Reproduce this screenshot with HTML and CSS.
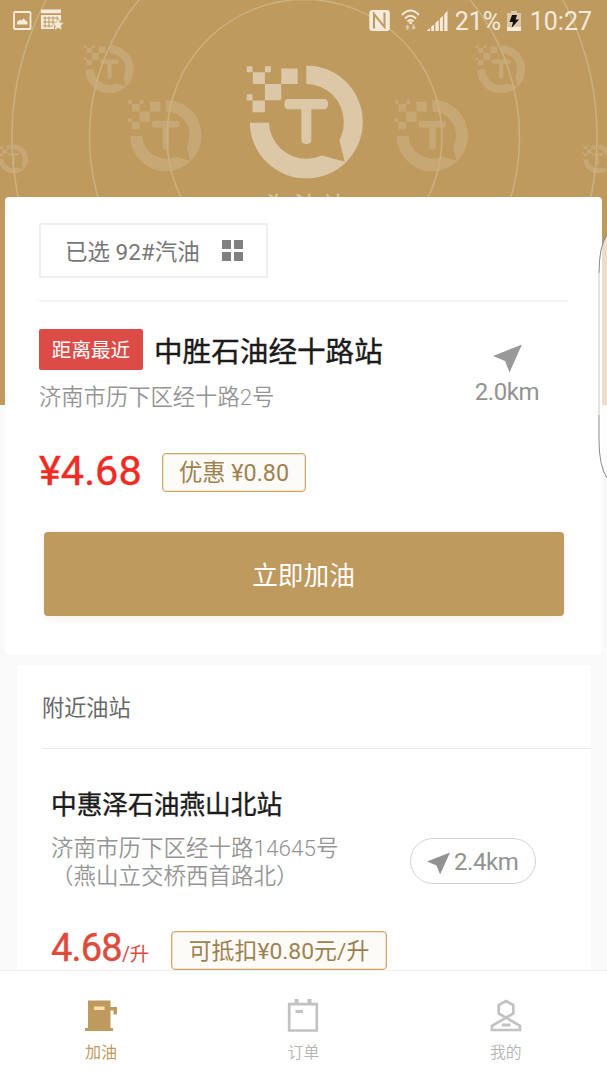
FILE: index.html
```html
<!DOCTYPE html>
<html lang="zh-CN">
<head>
<meta charset="utf-8">
<title>加油</title>
<link rel="stylesheet" href="styles.css">
</head>
<body>
<div class="app">
  <div class="hero">
    <svg class="hero-art" viewBox="0 0 607 405" aria-hidden="true">
      <defs>
        <symbol id="logo" viewBox="140 78 350 338">
          <path d="M319 78A169 169 0 1 1 150 249H207A113 113 0 0 0 321 357Q345 356 366 347L434 366L418 303Q431 275 431 247A113 113 0 0 0 319 133Z"/>
          <path d="M140 80h18v18h-18zM159 98h36v35h-36zM195 80h18v18h-18zM195 133h49v49h-49zM244 87h49v46h-49zM140 164h18v19h-18zM158 183h37v35h-37z"/>
          <path d="M265 178H372Q384 178 384 193T372 209H334V300Q334 313 319 313T304 300V209H265Q253 209 253 193T265 178Z"/>
        </symbol>
      </defs>
      <g class="ghosts">
        <use href="#logo" x="128" y="99.500" width="74" height="72"/>
        <use href="#logo" x="394.500" y="99.500" width="74" height="72"/>
        <use href="#logo" x="84" y="45" width="50" height="48.500"/>
        <use href="#logo" x="475.500" y="45" width="50" height="48.500"/>
        <use href="#logo" x="-2" y="144.500" width="30" height="29"/>
        <use href="#logo" x="582.500" y="144.500" width="30" height="29"/>
      </g>
      <g class="rings">
        <circle cx="304.5" cy="137" r="137.5"/>
        <circle cx="304.5" cy="137" r="215"/>
        <circle cx="304.5" cy="137" r="292.500"/>
      </g>
      <use class="main-logo" href="#logo" x="246.500" y="65.500" width="117" height="113"/>
      <text class="brand" x="266" y="213.500">淘油站</text>
    </svg>
  </div>

  <header class="status">
    <svg class="status-left" viewBox="0 0 52 24" aria-hidden="true">
      <rect x="2" y="4" width="16.500" height="17" rx="1" fill="none" stroke="currentColor" stroke-width="1.800"/>
      <path d="M5 16.500V14L8 11.500L9.500 12.500L11.500 10.500L15.500 14V16.500Z" fill="currentColor"/>
      <path d="M29 1.500h20v3.800H29zM29 7h20v5l-3 4-4 2 0 3H29z" fill="currentColor"/>
      <path d="M31 10h15M31 14h12M31 18h10M33 8.500v11M37 8.500v11M41 8.500v8M45 8.500v3" class="grid-lines"/>
      <path d="M46.300 10.300L48 14.500L52 14.800L49 17.600L50 22.500L46.300 20L42.300 22.500L43.300 17.600L40.300 14.800L44.600 14.500Z" class="star"/>
    </svg>
    <div class="status-right">
      <svg class="icons" viewBox="0 0 80 24" aria-hidden="true">
        <rect x=".3" y="2" width="20.500" height="21" rx="3" fill="currentColor"/>
        <path d="M5 20.500V6L15.500 19V4.500" class="nfc"/>
        <g class="wifi">
          <path d="M33 7Q41.500 -2 50 7M36 10.500Q41.500 5 47 10.500M38.500 13.500Q41.500 10.500 44.500 13.500"/>
        </g>
        <circle cx="41.500" cy="14.800" r="1.500" fill="currentColor"/>
        <path d="M36 19.500l2.500-3 2.500 3h-1.500V22h-2v-2.500zM42 19l2.500 3 2.500-3h-1.500v-2.500h-2V19z" class="dim"/>
        <path d="M57.500 23L61 20V23zM62.200 18.500l2.800-2V23h-2.800zM66.400 15l3.300-3v11h-3.300zM70.900 10.500l3-2.500v15h-3zM75.200 6.500L78.500 2.500V23h-3.300z" fill="currentColor"/>
      </svg>
      <span class="pct">21%</span>
      <svg class="battery" viewBox="0 0 14 22" aria-hidden="true">
        <path d="M4 1h6v2h4v18H0V3h4z" class="dim"/>
        <path d="M0 17h14v4H0z" fill="currentColor"/>
        <path d="M5 5h5L8.500 9.500H12L4.500 18L6 12H2.500z" fill="#111"/>
      </svg>
      <span class="clock">10:27</span>
    </div>
  </header>

  <main class="content">
    <section class="card nearest">
      <div class="fuel">
        <span>已选 92#汽油</span>
        <svg viewBox="0 0 21 21" aria-hidden="true"><path d="M0 0h9v9H0zM12 0h9v9h-9zM0 12h9v9H0zM12 12h9v9h-9z" fill="#808080"/></svg>
      </div>
      <div class="station">
        <div class="info">
          <div class="heading"><span class="tag">距离最近</span><h1>中胜石油经十路站</h1></div>
          <p class="address">济南市历下区经十路2号</p>
        </div>
        <div class="distance">
          <svg viewBox="0 0 30 29" aria-hidden="true"><path d="M30 0L17 29L12.500 17L0 12Z" fill="#999"/></svg>
          <span>2.0km</span>
        </div>
      </div>
      <div class="pricing"><span class="price">¥4.68</span><span class="chip first">优惠 ¥0.80</span></div>
      <button class="primary">立即加油</button>
    </section>

    <section class="card nearby">
      <h2>附近油站</h2>
      <article class="item">
        <h3>中惠泽石油燕山北站</h3>
        <div class="where">
          <p class="address">济南市历下区经十路14645号<br><span class="paren">（燕山立交桥西首路北）</span></p>
          <div class="pill">
            <svg viewBox="0 0 30 29" aria-hidden="true"><path d="M30 0L17 29L12.500 17L0 12Z" fill="#929292"/></svg>
            <span>2.4km</span>
          </div>
        </div>
        <div class="pricing2"><span class="price2">4.68<small>/升</small></span><span class="chip second">可抵扣¥0.80元/升</span></div>
      </article>
    </section>
  </main>

  <svg class="edge-handle" viewBox="0 0 10 250" aria-hidden="true">
    <path d="M10 5Q2 16 2 43V210Q2 236 10 248Z" fill="#fff" fill-opacity=".68"/>
    <path d="M10 5Q2 16 2 43" class="edge-line"/>
    <path d="M2 43V185" class="edge-line soft"/>
    <path d="M2 185V210Q2 236 10 248" class="edge-line"/>
  </svg>

  <nav class="tabs">
    <div class="tab active">
      <svg viewBox="0 0 34 34" aria-hidden="true">
        <path d="M4 1.500h22.500V8H33v7.500h-3.500v-4H26.500V29H29v3H1v-3h3z" fill="#be9a5f"/>
        <path d="M10 7.500h10.500V11H10z" fill="#ffe0a8"/>
      </svg>
      <span>加油</span>
    </div>
    <div class="tab">
      <svg viewBox="0 0 34 34" aria-hidden="true">
        <path d="M3.200 5.200h27.600v26.300H3.200z" fill="none" stroke="#c2c2c2" stroke-width="2.700"/>
        <path d="M8.500 0h4v4h-4zM21.500 0h4v4h-4zM9.500 11h7.500v3H9.500z" fill="#c2c2c2"/>
      </svg>
      <span>订单</span>
    </div>
    <div class="tab">
      <svg viewBox="0 0 34 34" aria-hidden="true">
        <path d="M17 2L24.300 6V14.500L17 18.700L9.700 14.500V6ZM17 18.700L31 26.800V31H3V26.800Z" fill="none" stroke="#c2c2c2" stroke-width="2.700"/>
        <path d="M13 24.500h8.500v3H13z" fill="#c2c2c2"/>
      </svg>
      <span>我的</span>
    </div>
  </nav>
</div>
</body>
</html>
```
FILE: styles.css
```css
* { box-sizing: border-box; }
body, h1, h2, h3, p { margin: 0; }
body {
  font-family: Roboto, "Noto Sans CJK SC", sans-serif;
  background: #f9f9f9;
}
.app {
  position: relative;
  width: 607px;
  height: 1080px;
  overflow: hidden;
  display: flex;
  flex-direction: column;
}
.app span, h1, h2, h3 { white-space: nowrap; }

/* decorative backdrop behind the status bar and the first card */
.hero {
  position: absolute;
  inset: 0 0 auto;
  height: 405px;
  background: #be9a5f;
}
.hero-art { display: block; width: 607px; height: 405px; }
.rings { fill: none; stroke: #cdb07f; stroke-width: 1.5; }
.ghosts { fill: #c7a875; }
.main-logo { fill: #dcc7a7; }
.brand { fill: #dcc7a7; font-size: 24px; letter-spacing: 4px; }

.status {
  position: relative;
  height: 41px;
  flex: none;
  display: flex;
  justify-content: space-between;
  padding: 8px 15px 0 12px;
  color: #f4ebdd;
}
.status-left { width: 52px; height: 24px; }
.status-right { display: flex; align-items: flex-start; }
.icons { width: 80px; height: 24px; margin-right: 6px; }
.pct, .clock { font-size: 25px; line-height: 27px; }
.pct { width: 52px; letter-spacing: -.1px; }
.clock { letter-spacing: 0; }
.battery { width: 14px; height: 22px; margin: 2px 9px 0 0; }
.dim { fill: #dcc7a7; }
.star { fill: #f4ebdd; stroke: #be9a5f; stroke-width: .6; }
.grid-lines { stroke: #be9a5f; stroke-width: 1; fill: none; }
.nfc { fill: none; stroke: #be9a5f; stroke-width: 2; }
.wifi { fill: none; stroke: currentColor; stroke-width: 2; }

.content {
  position: relative;
  flex: 1;
  min-height: 0;
  overflow: hidden;
  padding: 156px 5px 0;
}
.card { background: #fff; border-radius: 4px; }
.nearest { height: 458px; padding: 26px 34px 0; }
.fuel {
  width: 229px;
  height: 55px;
  border: 2px solid #efefef;
  display: flex;
  align-items: center;
  justify-content: space-between;
  padding: 0 23px 0 24px;
  font-size: 22.5px;
  color: #777;
}
.fuel span { padding-bottom: 2px; }
.fuel svg { width: 21px; height: 21px; }
.station {
  margin-top: 22px;
  border-top: 2px solid #f2f2f2;
  padding-top: 26px;
  display: flex;
  justify-content: space-between;
}
.heading { display: flex; align-items: center; gap: 11px; height: 42px; }
.tag {
  width: 104px;
  height: 41px;
  line-height: 43px;
  text-align: center;
  font-size: 19.6px;
  color: #fff;
  background: #dc4b46;
  border-radius: 2px;
}
h1, h3 { font-weight: 400; color: #1b1b1b; -webkit-text-stroke: .4px #1b1b1b; }
h1 { font-size: 28.6px; }
.address { font-size: 22.3px; line-height: 28px; font-weight: 350; color: #959595; }
.info .address { margin-top: 13px; }
.distance {
  width: 66px;
  margin: 16px 28px 0 0;
  display: flex;
  flex-direction: column;
  align-items: center;
  font-size: 24px;
  letter-spacing: -.4px;
  line-height: 29px;
  color: #929292;
}
.distance svg { width: 29px; height: 29px; margin-bottom: 5px; }
.pricing { display: flex; align-items: center; gap: 21px; margin-top: 41px; height: 40px; }
.price { font-size: 41.5px; line-height: 38px; padding-bottom: 2px; color: #ef2b22; width: 102px; -webkit-text-stroke: .4px #ef2b22; }
.chip {
  height: 39px;
  line-height: 39px;
  border: 1px solid #cda566;
  box-shadow: inset 0 0 0 1px #f1e4cd;
  border-radius: 4px;
  background: #fdfbf8;
  color: #9d8250;
  text-align: center;
  font-size: 23.3px;
}
.first { width: 144px; }
.second { width: 216px; font-size: 22.9px; }
.primary {
  display: block;
  width: 520px;
  height: 84px;
  margin: 40px 0 0 4.5px;
  padding: 0 0 1px;
  border: 0;
  border-radius: 4px;
  background: #be9a5f;
  box-shadow: 0 2px 8px rgba(190, 154, 95, .15);
  color: #fff;
  font: 25.7px Roboto, "Noto Sans CJK SC", sans-serif;
}
.nearby { margin: 10px 11px 0 12px; height: 400px; padding-left: 25px; }
h2 {
  height: 84px;
  line-height: 86px;
  border-bottom: 1px solid #e9e9e9;
  font-size: 22.2px;
  font-weight: 400;
  color: #686868;
}
.item { padding: 37px 55px 0 9px; }
h3 { font-size: 25.7px; line-height: 38px; }
.where { display: flex; justify-content: space-between; margin-top: 10px; }
.where .address { font-size: 22.5px; }
.pill {
  width: 126px;
  height: 46px;
  margin-top: 4px;
  border: 1px solid #d2d2d2;
  border-radius: 23px;
  display: flex;
  align-items: center;
  padding-left: 16px;
  gap: 4px;
  font-size: 24px;
  letter-spacing: -.4px;
  color: #929292;
}
.pill span { padding-top: 2px; }
.pill svg { width: 23px; height: 23px; margin-top: 5px; }
.pricing2 { display: flex; align-items: center; gap: 21px; margin-top: 41px; height: 39px; }
.price2 {
  width: 99px;
  height: 39px;
  line-height: 35px;
  font-size: 38px;
  letter-spacing: -.8px;
  color: #dd4b3d;
  -webkit-text-stroke: .4px #dd4b3d;
}
.price2 small { font-size: 19.3px; letter-spacing: 0; -webkit-text-stroke: 0; }

.edge-handle { position: absolute; left: 597px; top: 230px; width: 10px; height: 250px; }
.edge-line { fill: none; stroke: #888; stroke-width: 1; }
.soft { stroke: #c8c8c8; }

.tabs {
  position: relative;
  flex: none;
  height: 110px;
  border-top: 1px solid #eee;
  background: #fff;
  display: grid;
  grid-template-columns: repeat(3, 1fr);
}
.tab {
  display: flex;
  flex-direction: column;
  align-items: center;
  padding-top: 28px;
  gap: 9px;
  font-size: 15.8px;
  line-height: 22px;
  font-weight: 350;
  color: #b4b4b4;
}
.tab svg { width: 34px; height: 34px; }
.active { color: #be9a5f; font-weight: 400; }
```
